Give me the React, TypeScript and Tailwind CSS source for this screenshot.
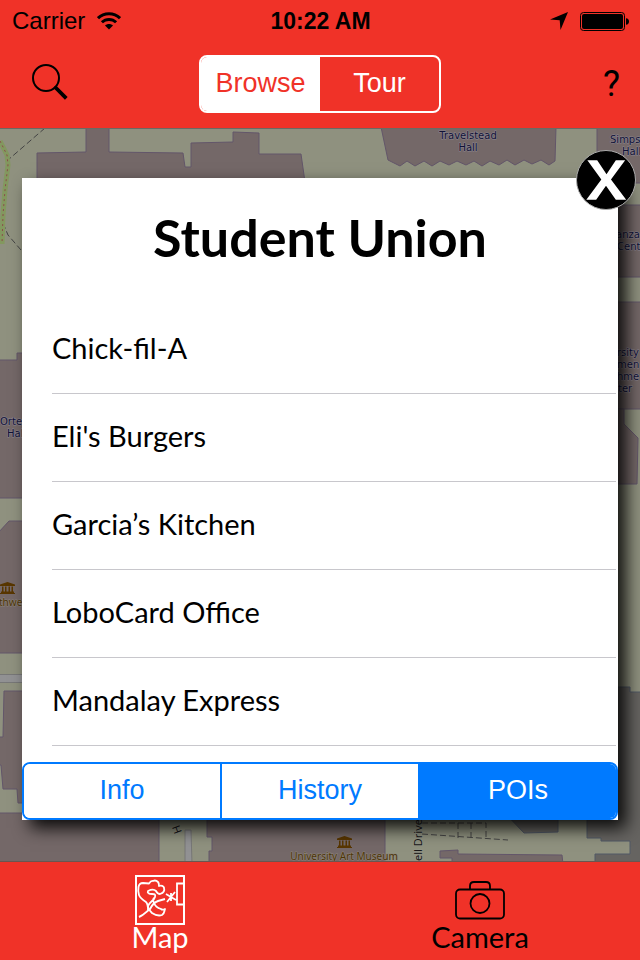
import { useState } from "react";

const places = [
  "Chick-fil-A",
  "Eli's Burgers",
  "Garcia’s Kitchen",
  "LoboCard Office",
  "Mandalay Express",
];

const sans = "font-['Liberation_Sans',Arial,sans-serif]";
const humanist = "font-['Lato','Open_Sans',sans-serif]";

function WifiIcon() {
  return (
    <svg viewBox="0 0 24 18" className="h-[18px] w-6" fill="none" stroke="#000" strokeWidth="3" aria-hidden="true">
      <path d="M1 6.2C7 .3 17 .3 23 6.2" />
      <path d="M4.9 10.3c4-3.9 10.2-3.9 14.2 0" />
      <path d="M12 17.6 8 13.6c2.300-2 5.700-2 8 0z" fill="#000" stroke="none" />
    </svg>
  );
}

function StatusBar() {
  return (
    <div className={`${sans} grid h-10 grid-cols-3 items-center pt-0.5 pr-[11px] pl-3 text-2xl leading-none`}>
      <div className="flex items-center gap-3">
        <span>Carrier</span>
        <WifiIcon />
      </div>
      <span className="text-center text-[23px] font-bold">10:22 AM</span>
      <div className="flex items-center justify-end gap-3">
        <svg viewBox="0 0 18 18" className="size-[18px]" aria-hidden="true">
          <path d="M18 0 10.500 18 9.700 8.300 0 7.500z" />
        </svg>
        <svg viewBox="0 0 49 19" className="h-[19px] w-[49px]" aria-hidden="true">
          <rect x=".5" y=".5" width="44" height="18" rx="3" fill="none" stroke="#000" />
          <rect x="2" y="2" width="41" height="15" rx="2" />
          <path d="M46 6.300c4 0 4 6.400 0 6.400z" />
        </svg>
      </div>
    </div>
  );
}

function NavBar() {
  const [mode, setMode] = useState("Browse");
  return (
    <nav className="grid h-[88px] grid-cols-[1fr_auto_1fr] items-center px-5">
      <button type="button" aria-label="Search" className="mb-1 ml-3 size-9 justify-self-start">
        <svg viewBox="0 0 36 36" className="size-9" fill="none" stroke="#000">
          <circle cx="14" cy="14" r="13" strokeWidth="2" />
          <path d="M22.500 22.500 24 24" strokeWidth="2" />
          <path d="M23.500 23.500 34.300 34.300" strokeWidth="3.800" />
        </svg>
      </button>
      <div className={`${sans} flex h-[58px] w-[242px] overflow-hidden rounded-lg border-2 border-white text-[27px]`}>
        {["Browse", "Tour"].map((name) => (
          <button
            key={name}
            type="button"
            aria-pressed={mode === name}
            onClick={() => setMode(name)}
            className={`flex-1 pb-0.5 ${mode === name ? "bg-white text-[#f03228]" : "text-white"}`}
          >
            {name}
          </button>
        ))}
      </div>
      <button
        type="button"
        aria-label="Help"
        className="justify-self-end font-[Roboto,sans-serif] text-[36px] leading-none"
      >
        ?
      </button>
    </nav>
  );
}

function Museum({ x, y }: { x: number; y: number }) {
  return (
    <g transform={`translate(${x} ${y})`} fill="#583600">
      <path d="M0 2.500 7.500 0 15 2.500V4H0zM1 9.500h13V11H1zM0 11h15v1H0zM2 4.500h1.500v5H2zM5 4.500h1.500v5H5zM8.500 4.500H10v5H8.500zM11.500 4.500H13v5h-1.500z" />
    </g>
  );
}

function CampusMap() {
  return (
    <svg
      viewBox="0 128 640 734"
      preserveAspectRatio="xMidYMid slice"
      className="absolute inset-0 size-full bg-[#8f917f]"
      aria-label="Campus map"
      role="img"
    >
      <g fill="#746868" stroke="#63566a" strokeWidth="1">
        <path d="M37 182V153l49-1V127h23v25l74 1 2 14h6V143l42-1V132l26 1v21h42l4 28z" />
        <path d="M381 127H556l-1 34-6 4-8-5-9 4-8-4-9 5-8-5-8 5-9-4-8 5-8-5-8 4-9-4-8 4-9-4-8 5-8-5-9 5-8-5-7 5-8-4-4-2z" />
        <path d="M597 127h50v56h-50z" />
        <path d="M610 205h37v72h-37zM610 302h37v107h-37z" />
        <path d="M610 409h14v15l14 14-1 46h-27z" />
        <path d="M-2 360H17V353H30V498H-2zM-2 533 9 521H30V653H-2zM4 691H30V803H18l-1-14H3L1 765h-3V737H3z" />
        <path d="M-2 813H159V864H-2zM207 810V837h5v14h-3v13H385V810z" />
        <path d="M440 851l18-1v4l104 1 1 9H452v-6H440z" />
      </g>
      <g fill="#666461" stroke="#505866" strokeWidth="1">
        <path d="M587 810V838h14v3h29v13H595v10h50V692H630v-5H600V810z" />
        <path d="M502 810l22 23 34-1V810z" />
      </g>
      <g stroke="#777" strokeWidth="1" fill="#919193">
        <path d="M-2 674.500H30v8H-2zM185 830h6l1 34h-7z" />
      </g>
      <g fill="none" stroke="#444" strokeWidth="1" strokeDasharray="6 3">
        <path d="M45 128 8 160M3 223l5 12 13 15M422 823h64v16M458 823v16M471 823v15M422 834l86 6" />
      </g>
      <path d="M0 141l7 14 1 10-3 25-2 25-1 29" fill="none" stroke="#83985f" strokeWidth="5" />
      <path d="M0 141l7 14 1 10-3 25-2 25-1 29" fill="none" stroke="#8b4d49" strokeWidth="1" strokeDasharray="2 3" />
      <g
        fontFamily="'DejaVu Sans', sans-serif"
        fontSize="10"
        textAnchor="middle"
        fill="#101136"
        stroke="#8c8692"
        strokeWidth="1"
        paintOrder="stroke"
      >
        <text x="468" y="139">Travelstead</text>
        <text x="468" y="151">Hall</text>
        <text x="610" y="143" textAnchor="start">Simps</text>
        <text x="622" y="155" textAnchor="start">Hall</text>
        <text x="616" y="238" textAnchor="start">anza</text>
        <text x="617" y="250" textAnchor="start">Cent</text>
        <text x="617" y="356" textAnchor="start">rsity</text>
        <text x="617" y="368" textAnchor="start">men</text>
        <text x="617" y="380" textAnchor="start">hme</text>
        <text x="618" y="392" textAnchor="start">ter</text>
        <text x="0" y="425" textAnchor="start">Orte</text>
        <text x="7" y="437" textAnchor="start">Hal</text>
      </g>
      <g fontFamily="'Noto Sans', sans-serif" fontSize="10" fill="#4d3408" stroke="#8c8478" strokeWidth="1" paintOrder="stroke">
        <text x="-1" y="606">thwe</text>
        <text x="344" y="860" textAnchor="middle">University Art Museum</text>
      </g>
      <g fontFamily="'Noto Sans', sans-serif" fontSize="11" fill="#151515" stroke="#96978c" strokeWidth="1" paintOrder="stroke">
        <text transform="translate(422 861) rotate(-90)">ell Drive</text>
        <text transform="translate(182 832) rotate(-110)">H</text>
      </g>
      <Museum x={0} y={582} />
      <Museum x={337} y={836} />
      <path d="M0 128.500H640" stroke="#6b6a63" />
      <path d="M0 861.500H640" stroke="#6b5550" />
    </svg>
  );
}

function PlaceCard() {
  const [tab, setTab] = useState("POIs");
  return (
    <section className="relative flex flex-1 flex-col bg-white shadow-[8px_8px_16px_0_rgba(0,0,0,0.9)]">
      <h1 className={`${humanist} h-32 pt-7 text-center text-[52px] leading-[62px] font-bold`}>Student Union</h1>
      <ul className={`${humanist} mr-0.5 ml-[30px] flex-1 text-[29px]`}>
        {places.map((place) => (
          <li key={place} className="border-b border-[#c8c7cc]">
            <button type="button" className="h-[87px] w-full pb-1 text-left">
              {place}
            </button>
          </li>
        ))}
      </ul>
      <div
        className={`${sans} flex h-[58px] divide-x-2 divide-[#007aff] overflow-hidden rounded-lg border-2 border-[#007aff] text-[27px]`}
      >
        {["Info", "History", "POIs"].map((name) => (
          <button
            key={name}
            type="button"
            aria-pressed={tab === name}
            onClick={() => setTab(name)}
            className={`flex-1 pb-0.5 ${tab === name ? "bg-[#007aff] text-white" : "bg-white text-[#007aff]"}`}
          >
            {name}
          </button>
        ))}
      </div>
      <button
        type="button"
        aria-label="Close"
        className="absolute -top-7 -right-[18px] size-[60px] rounded-full border border-[#aaa] bg-black"
      >
        <svg viewBox="0 0 56 56" className="size-full" fill="#fff" aria-hidden="true">
          <path d="M10 9H19.500L28.500 22.500 37.500 9H46.500L32.800 27.500 47.500 47H37.500L28 33.500 18.500 47H9L23.500 27.500z" />
        </svg>
      </button>
    </section>
  );
}

function MapIcon() {
  return (
    <svg viewBox="0 0 50 50" className="size-[50px]" fill="none" stroke="currentColor" aria-hidden="true">
      <rect x="1" y="1" width="48" height="48" strokeWidth="2" />
      <path
        strokeWidth="1.800"
        strokeLinejoin="round"
        d="M11 27C8 25 5 23 4 20 3 17 3 15 3.500 12 4 9 6 8 8 8l6 .5C15 7 16 5.500 18 6c2-1 4 0 5 1 1 1 1 2 1 4 2-1 5 0 5 2 1 3-1 5-4 6-2 0-3-1-4-3-2-2-6-1-8 0-1 2 1 3 4 3 2 0 4 0 3 3-1 4-6 5-7 9 0 3 2 5 4 7 3 2 7 3 10 2 3-2 2-4 3-6-2 1-3 1-4 0-3-1-6-3-7-6-1-2-1-4 0-5M11 27c2 2 2 5 2 8"
      />
      <path strokeWidth="2" d="M4 42c5-2 8-6 11-8 2-4 5-7 8-8l7-2" />
      <path strokeWidth="1.800" d="M31 19l10 6M32 27l8-10M36 18v8M49 8.500H42V29.500h7" />
    </svg>
  );
}

function CameraIcon() {
  return (
    <svg viewBox="0 0 50 50" className="size-[50px]" fill="none" stroke="currentColor" strokeWidth="1.800" aria-hidden="true">
      <rect x="1" y="14.500" width="48" height="29" rx="4" />
      <path d="M15 14.500V11c0-3 1-4 4-4h12c3 0 4 1 4 4v3.500" />
      <circle cx="25" cy="28.500" r="9.500" />
    </svg>
  );
}

function TabBar() {
  return (
    <nav className={`${humanist} grid h-[98px] grid-cols-2 bg-[#f03228] text-[29px] leading-6`}>
      <button type="button" aria-current="page" className="flex flex-col items-center pt-[13px] text-white">
        <MapIcon />
        <span>Map</span>
      </button>
      <button type="button" className="flex flex-col items-center pt-[13px] text-black">
        <CameraIcon />
        <span>Camera</span>
      </button>
    </nav>
  );
}

export default function App() {
  return (
    <div className="flex min-h-screen flex-col text-black">
      <header className="bg-[#f03228]">
        <StatusBar />
        <NavBar />
      </header>
      <main className="relative flex flex-1 flex-col overflow-hidden px-[22px] pt-[50px] pb-[42px]">
        <CampusMap />
        <PlaceCard />
      </main>
      <TabBar />
    </div>
  );
}
